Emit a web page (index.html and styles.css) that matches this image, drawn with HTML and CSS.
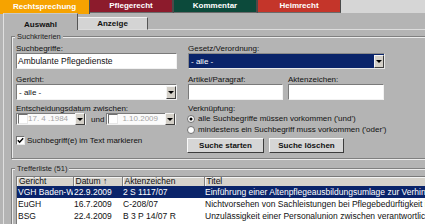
FILE: index.html
```html
<!DOCTYPE html>
<html lang="de">
<head>
<meta charset="utf-8">
<title>Rechtsprechung</title>
<link rel="stylesheet" href="styles.css">
</head>
<body>
<div class="app">
  <nav class="topnav">
    <a class="tab t-recht">Rechtsprechung</a>
    <a class="tab t-pflege">Pflegerecht</a>
    <a class="tab t-komm">Kommentar</a>
    <a class="tab t-heim">Heimrecht</a>
  </nav>
  <div class="subtabs">
    <div class="stab stab-active">Auswahl</div>
    <div class="stab stab-other">Anzeige</div>
    <div class="stab-fill"></div>
  </div>
  <div class="panel">
    <fieldset class="group crit">
      <legend>Suchkriterien</legend>
      <div class="cols">
        <div class="col col-left">
          <div class="lbl">Suchbegriffe:</div>
          <div class="field field-text">Ambulante Pflegedienste</div>
          <div class="lbl mt4">Gericht:</div>
          <div class="field select"><span class="val">- alle -</span><span class="drop"></span></div>
          <div class="lbl mt2">Entscheidungsdatum zwischen:</div>
          <div class="daterow">
            <div class="date"><span class="cb"></span><span class="dval">17. 4 .1984</span><span class="drop"></span></div>
            <span class="und">und</span>
            <div class="date"><span class="cb"></span><span class="dval">1.10.2009</span><span class="drop"></span></div>
          </div>
          <div class="checkrow">
            <span class="cb cb-checked"><svg width="7" height="7" viewBox="0 0 7 7"><path d="M0.8 3.2 L2.6 5.2 L6.2 1.2" fill="none" stroke="#000" stroke-width="1.5"/></svg></span>
            <span>Suchbegriff(e) im Text markieren</span>
          </div>
        </div>
        <div class="col col-right">
          <div class="lbl">Gesetz/Verordnung:</div>
          <div class="field select select-focus"><span class="val">- alle -</span><span class="drop"></span></div>
          <div class="pair mt4">
            <div class="pair-item w-art">
              <div class="lbl">Artikel/Paragraf:</div>
              <div class="field"></div>
            </div>
            <div class="pair-item w-akt">
              <div class="lbl">Aktenzeichen:</div>
              <div class="field"></div>
            </div>
          </div>
          <div class="lbl mt2">Verknüpfung:</div>
          <div class="radio-row">
            <svg class="radio" width="8" height="8" viewBox="0 0 8 8"><circle cx="4" cy="4" r="3.5" fill="#fff" stroke="#707070"/><circle cx="4" cy="4" r="1.5" fill="#000"/></svg>
            <span>alle Suchbegriffe müssen vorkommen ('und')</span>
          </div>
          <div class="radio-row">
            <svg class="radio" width="8" height="8" viewBox="0 0 8 8"><circle cx="4" cy="4" r="3.5" fill="#fff" stroke="#707070"/></svg>
            <span>mindestens ein Suchbegriff muss vorkommen ('oder')</span>
          </div>
          <div class="buttons">
            <button class="btn w-start">Suche starten</button>
            <button class="btn w-clear">Suche löschen</button>
          </div>
        </div>
      </div>
    </fieldset>
    <fieldset class="group results">
      <legend>Trefferliste (51)</legend>
      <div class="tablewrap">
        <table class="grid">
          <colgroup><col class="c1"><col class="c2"><col class="c3"><col class="c4"></colgroup>
          <thead>
            <tr><th>Gericht</th><th>Datum ↑</th><th>Aktenzeichen</th><th>Titel</th></tr>
          </thead>
          <tbody>
            <tr class="sel"><td>VGH Baden-Württemberg</td><td>22.9.2009</td><td>2 S 1117/07</td><td>Einführung einer Altenpflegeausbildungsumlage zur Verhinderung eines Mangels</td></tr>
            <tr><td>EuGH</td><td>16.7.2009</td><td>C-208/07</td><td>Nichtvorsehen von Sachleistungen bei Pflegebedürftigkeit im Ausland</td></tr>
            <tr><td>BSG</td><td>22.4.2009</td><td>B 3 P 14/07 R</td><td>Unzulässigkeit einer Personalunion zwischen verantwortlicher Pflegefachkraft</td></tr>
            <tr class="blank"><td></td><td></td><td></td><td></td></tr>
          </tbody>
        </table>
      </div>
    </fieldset>
  </div>
</div>
</body>
</html>
```

FILE: styles.css
```css
* { box-sizing: border-box; }
html, body { margin: 0; padding: 0; }
body {
  width: 425px;
  height: 224px;
  overflow: hidden;
  background: #b4b4b4;
  font-family: "Liberation Sans", Arial, sans-serif;
  font-size: 8px;
  color: #111;
}
.app { width: 480px; }

/* top navigation */
.topnav {
  display: flex;
  align-items: flex-start;
  height: 13px;
  background: #d6d6d6;
}
.tab {
  display: flex;
  align-items: center;
  justify-content: center;
  height: 13px;
  color: #fff;
  font-weight: bold;
  font-size: 8px;
  border-bottom: 1px solid #6a6a6a;
  border-right: 2px solid #4a4a4a;
  padding-bottom: 1px;
}
.t-recht { width: 90px; height: 14px; background: #f6a300; border-right-width: 1px; border-bottom: 0; }
.t-pflege { width: 84px; background: #8c1b2c; }
.t-komm { width: 84px; background: #0c4a3b; }
.t-heim { width: 83px; background: #c4352a; border-right-width: 1px; }

/* sub tabs */
.subtabs {
  display: flex;
  height: 17px;
  padding-left: 3px;
}
.stab {
  display: flex;
  align-items: center;
  justify-content: center;
  font-weight: bold;
  font-size: 8px;
}
.stab-active {
  width: 75px;
  padding-top: 4px;
  border-left: 1px solid #e2e2e2;
  border-top: 1px solid #c8c8c8;
  border-right: 1px solid #555;
}
.stab-other {
  width: 70px;
  height: 13px;
  margin-top: 4px;
  background: #d4d4d4;
  border-top: 1px solid #f0f0f0;
  border-right: 1px solid #555;
  border-bottom: 1px solid #dcdcdc;
}
.stab-fill { flex: 1; border-bottom: 1px solid #dcdcdc; }

/* panel */
.panel {
  margin-left: 3px;
  padding: 1px 0 0 7px;
  border-left: 1px solid #e0e0e0;
  height: 200px;
}
.group {
  margin: 0;
  padding: 0 0 5px 3px;
  border: 1px solid #808080;
  box-shadow: inset 1px 1px 0 #ececec, 1px 1px 0 #ececec;
  min-width: 0;
  width: 460px;
}
.group legend {
  padding: 0 2px;
  font-size: 7.5px;
  line-height: 11px;
  background: #b4b4b4;
  color: #222;
}
.results { margin-top: 4px; padding: 2px 0 0 3px; }

.cols { display: flex; gap: 11px; margin-left: 1px; }
.col { display: flex; flex-direction: column; }
.col-left { width: 161px; }
.col-right { width: 197px; }

.lbl { height: 11px; line-height: 13px; white-space: nowrap; }
.mt4 { margin-top: 4px; }
.mt2 { margin-top: 2px; }

.field {
  height: 16px;
  background: #fff;
  border: 1px solid;
  border-color: #7a7a7a #f2f2f2 #f2f2f2 #7a7a7a;
  display: flex;
  align-items: center;
}
.field-text { padding-left: 1px; font-size: 8.5px; }
.select .val { flex: 1; padding-left: 2px; }
.select-focus { background: #0a246a; color: #fff; border-color: #8a8a8a #e8e8e8 #e8e8e8 #8a8a8a; }
.drop {
  width: 10px;
  height: 13px;
  background: #d4d0c8;
  border: 1px solid;
  border-color: #f4f4f4 #404040 #404040 #f4f4f4;
  display: flex;
  align-items: center;
  justify-content: center;
  flex: none;
}
.drop::after {
  content: "";
  width: 0;
  height: 0;
  border-left: 3px solid transparent;
  border-right: 3px solid transparent;
  border-top: 3px solid #000;
}

.daterow { display: flex; align-items: center; height: 12px; }
.date {
  width: 70px;
  height: 12px;
  display: flex;
  align-items: center;
  background: #fbfbfb;
  border: 1px solid;
  border-color: #7a7a7a #f2f2f2 #f2f2f2 #7a7a7a;
}
.date .cb { margin-left: 1px; width: 10px; height: 10px; }
.date .dval {
  flex: 1;
  text-align: right;
  padding-right: 7px;
  color: #a4a4a4;
  font-size: 8px;
  white-space: nowrap;
  line-height: 10px;
}
.date .drop { height: 12px; }
.und { width: 20px; padding-left: 5px; }

.cb {
  display: flex;
  align-items: center;
  justify-content: center;
  width: 9px;
  height: 9px;
  background: #fff;
  border: 1px solid;
  border-color: #707070 #e8e8e8 #e8e8e8 #707070;
  flex: none;
}
.checkrow {
  display: flex;
  align-items: center;
  gap: 2px;
  height: 10px;
  margin-top: 10px;
  white-space: nowrap;
}

.pair { display: flex; gap: 5px; }
.pair-item { display: flex; flex-direction: column; }
.w-art { width: 95px; }
.w-akt { width: 96px; }

.radio-row {
  display: flex;
  align-items: center;
  gap: 3px;
  height: 11px;
  white-space: nowrap;
  margin-left: -1px;
}
.radio { flex: none; }

.buttons { display: flex; gap: 5px; margin-top: 3px; margin-left: -1px; }
.btn {
  height: 15px;
  padding: 0;
  background: #d6d6d6;
  border: 1px solid;
  border-color: #fafafa #3c3c3c #3c3c3c #fafafa;
  font-family: "Liberation Sans", Arial, sans-serif;
  font-weight: bold;
  font-size: 8px;
  color: #111;
}
.w-start { width: 77px; }
.w-clear { width: 75px; }

/* results table */
.tablewrap {
  margin-left: 1px;
  border-top: 1px solid #7a7a7a;
  border-left: 1px solid #7a7a7a;
  background: #fff;
}
.grid {
  border-collapse: collapse;
  table-layout: fixed;
  width: 507px;
}
.c1 { width: 56px; }
.c2 { width: 49px; }
.c3 { width: 82px; }
.c4 { width: 320px; }
.grid th {
  height: 9px;
  padding: 0 0 0 2px;
  text-align: left;
  font-weight: normal;
  font-size: 8.5px;
  line-height: 9px;
  background: #d6d3cc;
  border-right: 1px solid #808080;
  box-shadow: inset 1px 1px 0 #f4f4f4;
  white-space: nowrap;
  overflow: hidden;
}
.grid td {
  height: 12px;
  padding: 0 0 0 1px;
  font-size: 8.5px;
  line-height: 12px;
  white-space: nowrap;
  overflow: hidden;
}
.grid tr.sel td { background: #0a246a; color: #fff; }
```
